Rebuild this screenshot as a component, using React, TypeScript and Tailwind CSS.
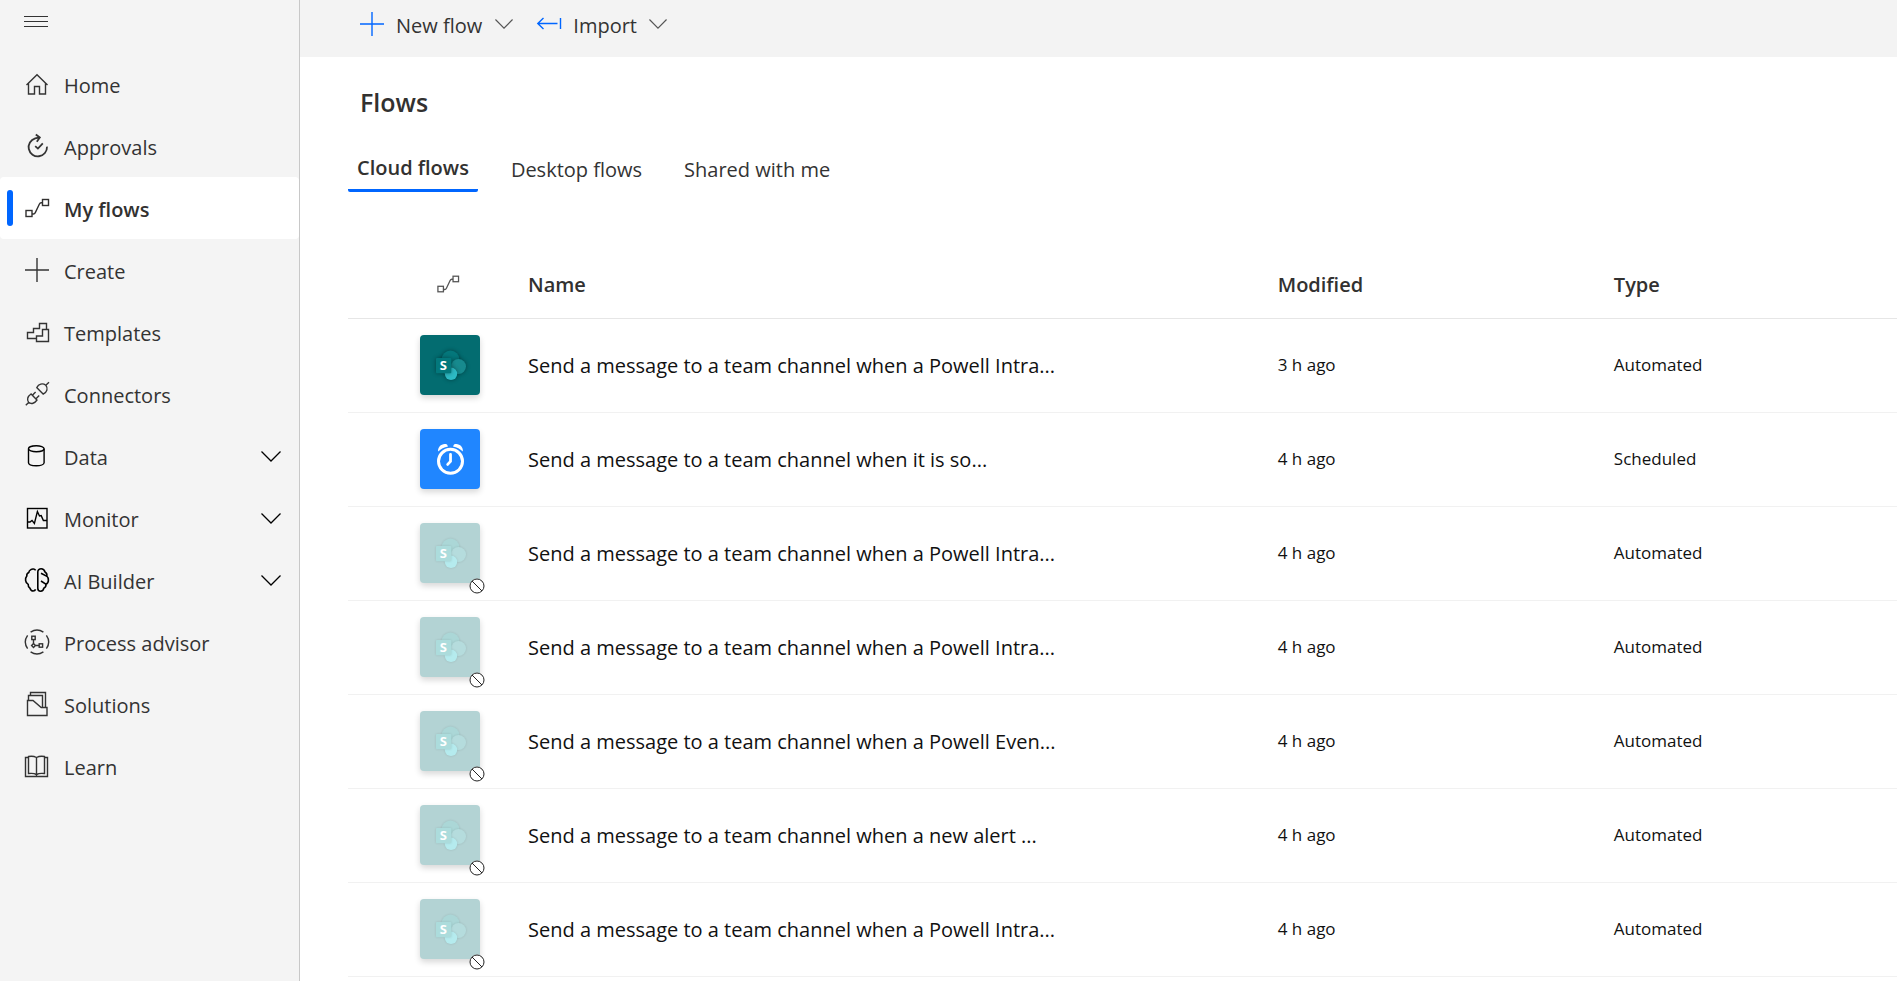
import type { ReactNode } from 'react';

type NavItem = {
  label: string;
  icon: ReactNode;
  active?: boolean;
  expandable?: boolean;
  dark?: boolean;
};

type Flow = {
  name: string;
  modified: string;
  type: string;
  kind: 'sharepoint' | 'schedule';
  disabled?: boolean;
};

const flowGlyph = (
  <>
    <rect x="1" y="14.5" width="6" height="6" />
    <rect x="17.5" y="3.5" width="6" height="6" />
    <path d="M7 18h1.5c1 0 1.4-.6 1.8-1.4l4-8.4c.4-.8.8-1.4 1.8-1.4h1.4" />
  </>
);

const navItems: NavItem[] = [
  {
    label: 'Home',
    icon: <path d="M1.5 13 12 2.8 22.5 13M3.5 11.5V22H9.5V14.5H14.5V22H20.5V11.5" />,
  },
  {
    label: 'Approvals',
    icon: (
      <g strokeWidth="1.8">
        <path d="M22 12.6A9.2 9.2 0 1 1 10.2 4.3L14.5 3.4M10.8.5l4 3-3 4.2M10.2 12.2l2.7 2.4 4.9-5.2" />
      </g>
    ),
  },
  { label: 'My flows', icon: flowGlyph, active: true },
  { label: 'Create', icon: <path d="M12 0V24M0 12H24" /> },
  {
    label: 'Templates',
    icon: <path d="M11 18.5H2.5V12.5H8.5V8.5H14.5V3.5H21.5V9.5M17.5 9.5H23.5V21.5H11.5V16H17.5Z" />,
  },
  {
    label: 'Connectors',
    icon: (
      <>
        <path d="M.8 23.2 3.6 20.4M5.6 11.6 12.4 18.4M6 12C2.6 14.4 1.6 17.6 3.6 20.4 6.4 22.4 9.6 21.4 12 18" />
        <path d="M7.4 13.2 10.6 10M11 16.8 14.2 13.6" />
        <path d="M11.4 5.2 18.6 12.4M11.8 5.6C13.6 1.8 17.6.8 20.8 3.2 23.2 6.4 22.2 10.2 18.2 12M20.8 3.2 24 .2" />
      </>
    ),
  },
  {
    label: 'Data',
    expandable: true,
    dark: true,
    icon: (
      <>
        <ellipse cx="11.3" cy="4.8" rx="7.8" ry="3" />
        <path d="M3.5 4.8V18.8C3.5 20.5 7 21.8 11.3 21.8S19.1 20.5 19.1 18.8V4.8" />
      </>
    ),
  },
  {
    label: 'Monitor',
    expandable: true,
    dark: true,
    icon: (
      <>
        <rect x="2.5" y="2.5" width="19.5" height="19.5" />
        <path d="M2.5 16H5L7 14.4 9.4 17.5 12.4 5.5 14.5 10 16.2 9.6 18.4 14.5H22" />
      </>
    ),
  },
  {
    label: 'AI Builder',
    expandable: true,
    dark: true,
    icon: (
      <g strokeWidth="1.6">
        <path d="M10.6 2.4C9.6.8 7.4.6 5.8 1.7 4.4 2.6 3.8 3.4 3.8 4.5 2.2 5.2 1.6 6.6 1.8 8 .8 9.2.4 10.8.6 12.4.8 14.4 1.6 15.6 3.2 16.4 3 18.2 3.6 19.4 5 20.2 5.6 22 6.8 23 8.2 23 9.4 23 10.2 22.4 10.6 21.4" />
        <path d="M12.8 4V20.2C12.8 22 14 23.2 15.6 23.2 17.4 23.2 18.6 21.8 18.8 20.2 20.6 19.4 21.2 18 21 16.2 22.6 15.4 23.4 13.8 23.4 12.2 23.4 10.4 22.8 9 21.8 8 22.2 6 21.4 4.8 20 4 19.4 2 18 .8 16.2.8 14.2.8 12.8 2 12.8 4Z" />
        <path d="M16 5.2 22 8.4M16 13 21.2 16.4" />
      </g>
    ),
  },
  {
    label: 'Process advisor',
    icon: (
      <>
        <path d="M5.6 2.2A11.5 11.5 0 0 1 18.4 2.2M5.6 21.8A11.5 11.5 0 0 0 18.4 21.8M2.6 5.4A11.5 11.5 0 0 0 2.6 18.6M21.4 5.4A11.5 11.5 0 0 1 21.4 18.6" />
        <rect x="6.8" y="6.2" width="3.4" height="3.4" />
        <rect x="14.2" y="13.8" width="3.4" height="3.4" />
        <path d="M8.5 9.6V13.6M10.4 15.5H14.2M8.5 13.6 10.4 15.5 8.5 17.4 6.6 15.5Z" />
      </>
    ),
  },
  {
    label: 'Solutions',
    icon: <path d="M2.5 8.5H8L16.2 15.5H22V23.5H2.5ZM3.5 8.5V3.5H17.5V15.5M5.5 3.5V.5H20.5V15.5" />,
  },
  {
    label: 'Learn',
    icon: (
      <>
        <path d="M3.5 3.5H.5V22.5H22.5V3.5H19.5" />
        <path d="M11.5 3.5C9.4 2.3 6 2 3.5 2.5V19.5C6 19.2 9.4 19.2 11.5 20.6 13.6 19.2 17 19.2 19.5 19.5V2.5C17 2 13.6 2.3 11.5 3.5ZM11.5 3.6V22.5" />
      </>
    ),
  },
];

const flows: Flow[] = [
  { name: 'Send a message to a team channel when a Powell Intra...', modified: '3 h ago', type: 'Automated', kind: 'sharepoint' },
  { name: 'Send a message to a team channel when it is so...', modified: '4 h ago', type: 'Scheduled', kind: 'schedule' },
  { name: 'Send a message to a team channel when a Powell Intra...', modified: '4 h ago', type: 'Automated', kind: 'sharepoint', disabled: true },
  { name: 'Send a message to a team channel when a Powell Intra...', modified: '4 h ago', type: 'Automated', kind: 'sharepoint', disabled: true },
  { name: 'Send a message to a team channel when a Powell Even...', modified: '4 h ago', type: 'Automated', kind: 'sharepoint', disabled: true },
  { name: 'Send a message to a team channel when a new alert ...', modified: '4 h ago', type: 'Automated', kind: 'sharepoint', disabled: true },
  { name: 'Send a message to a team channel when a Powell Intra...', modified: '4 h ago', type: 'Automated', kind: 'sharepoint', disabled: true },
];

const tileColors = {
  on: { top: '#04777b', right: '#178a8e', bottom: '#2dbac4', square: '#03787c' },
  off: { top: '#abd7d7', right: '#b5dcdd', bottom: '#b5ebee', square: '#acdcdc' },
};

function Glyph({ children, className = '' }: { children: ReactNode; className?: string }) {
  return (
    <svg
      viewBox="0 0 24 24"
      className={`shrink-0 overflow-visible ${className}`}
      fill="none"
      stroke="currentColor"
      strokeWidth="1.4"
      aria-hidden="true"
    >
      {children}
    </svg>
  );
}

function Chevron({ className = '' }: { className?: string }) {
  return (
    <svg viewBox="0 0 20 11" className={`shrink-0 ${className}`} fill="none" stroke="currentColor" strokeWidth="1.3" aria-hidden="true">
      <path d="M.5.5 10 10 19.5.5" />
    </svg>
  );
}

function SharePointIcon({ disabled }: { disabled?: boolean }) {
  const colors = disabled ? tileColors.off : tileColors.on;
  const shadow = disabled
    ? 'drop-shadow-[0_0_1px_rgba(0,0,0,0.12)]'
    : 'drop-shadow-[0_0_2px_rgba(0,0,0,0.4)]';

  return (
    <svg viewBox="0 0 60 60" className="h-full w-full" aria-hidden="true">
      <g className={shadow}>
        <circle cx="30.5" cy="24.5" r="9" fill={colors.top} />
      </g>
      <g className={shadow}>
        <circle cx="38.5" cy="31.5" r="7.5" fill={colors.right} />
      </g>
      <g className={shadow}>
        <circle cx="31" cy="38.8" r="6.2" fill={colors.bottom} />
      </g>
      <g className={shadow}>
        <rect x="16" y="23" width="15.3" height="15.3" rx="1" fill={colors.square} />
      </g>
      <text x="23.4" y="35" textAnchor="middle" fontSize="13" fontWeight="700" fill="#fff">
        S
      </text>
    </svg>
  );
}

function ClockIcon() {
  return (
    <svg viewBox="0 0 60 60" className="h-full w-full" fill="none" stroke="#fff" strokeLinecap="round" aria-hidden="true">
      <circle cx="30.5" cy="32.3" r="12" strokeWidth="3" />
      <path d="M30.5 25.5V32.4L27.7 35.4" strokeWidth="2.8" strokeLinejoin="round" />
      <path d="M18.2 22.6C17.3 18 22.5 13.6 27 15.6L28 17.4C24 18 21 19.6 18.2 22.6ZM42.8 22.6C43.7 18 38.5 13.6 34 15.6L33 17.4C37 18 40 19.6 42.8 22.6Z" fill="#fff" stroke="none" />
    </svg>
  );
}

function tileClass(kind: Flow['kind'], disabled?: boolean) {
  if (disabled) return 'h-full w-full rounded-[4px] bg-[#b3d3d4] shadow-[0_3px_6px_rgba(0,0,0,0.16)]';
  if (kind === 'schedule') return 'h-full w-full rounded-[4px] bg-[#2086ff] shadow-[0_3px_6px_rgba(0,0,0,0.16)]';
  return 'h-full w-full rounded-[4px] bg-[#036c70] shadow-[0_3px_6px_rgba(0,0,0,0.16)]';
}

function FlowTile({ kind, disabled }: { kind: Flow['kind']; disabled?: boolean }) {
  return (
    <div className="relative h-[60px] w-[60px]">
      <div className={tileClass(kind, disabled)}>
        {kind === 'schedule' ? <ClockIcon /> : <SharePointIcon disabled={disabled} />}
      </div>
      {disabled && (
        <svg viewBox="0 0 18 18" className="absolute -right-[6px] -bottom-[12px] h-[18px] w-[18px]" fill="none" role="img" aria-label="Off">
          <circle cx="9" cy="9" r="7.5" fill="#fff" />
          <circle cx="9" cy="9" r="7" stroke="#222" />
          <path d="M4 4l10 10" stroke="#222" />
        </svg>
      )}
    </div>
  );
}

function Sidebar() {
  return (
    <aside className="w-[300px] shrink-0 border-r border-[#c8c8c8] bg-[#f4f4f4]">
      <div className="flex h-[53px] items-start px-6 pt-4">
        <button type="button" aria-label="Collapse navigation" className="flex w-6 flex-col gap-1">
          <span className="h-px w-full bg-[#333]"></span>
          <span className="h-px w-full bg-[#333]"></span>
          <span className="h-px w-full bg-[#333]"></span>
        </button>
      </div>
      <nav>
        {navItems.map((item) => (
          <a
            key={item.label}
            href="#"
            aria-current={item.active ? 'page' : undefined}
            className={
              item.active
                ? 'flex h-[62px] items-center rounded-[4px] bg-white pr-[18px] pl-[7px] text-[20px] font-semibold text-[#323130]'
                : 'flex h-[62px] items-center pr-[18px] pl-[7px] text-[20px] text-[#333]'
            }
          >
            <span className={item.active ? 'h-9 w-[6px] rounded-full bg-[#0066ff]' : 'h-9 w-[6px]'}></span>
            <Glyph className={item.dark ? 'ml-3 h-6 w-6 text-black' : 'ml-3 h-6 w-6'}>{item.icon}</Glyph>
            <span className="ml-[15px] flex-1 pt-1">{item.label}</span>
            {item.expandable && <Chevron className="h-[11px] w-5 text-black" />}
          </a>
        ))}
      </nav>
    </aside>
  );
}

function CommandBar() {
  return (
    <div className="flex h-[57px] items-start bg-[#f3f3f3] pt-2 pl-[60px] text-[20px] text-[#333]">
      <button type="button" className="flex h-8 items-center">
        <Glyph className="h-6 w-6 text-[#0066ff]">
          <path d="M12 0V24M0 12H24" />
        </Glyph>
        <span className="ml-3 pt-1">New flow</span>
        <Chevron className="ml-[13px] h-[10px] w-[18px] text-[#555]" />
      </button>
      <button type="button" className="ml-6 flex h-8 items-center">
        <Glyph className="h-6 w-6 text-[#0066ff]">
          <path d="M.8 11.5H20.5M6.5 6 .8 11.5 6.5 17M23.5 6V17" />
        </Glyph>
        <span className="ml-3 pt-1">Import</span>
        <Chevron className="ml-3 h-[10px] w-[18px] text-[#555]" />
      </button>
    </div>
  );
}

export default function App() {
  return (
    <div className="flex min-h-screen bg-white font-['Open_Sans','Noto_Sans',sans-serif]">
      <Sidebar />
      <main className="min-w-0 flex-1">
        <CommandBar />
        <div className="pl-12">
          <h1 className="pt-[27px] pl-3 text-[25px] leading-9 font-semibold text-[#323130]">Flows</h1>
          <div role="tablist" className="mt-7 flex h-11 text-[20px] leading-7 text-[#333]">
            <button type="button" role="tab" aria-selected="true" className="rounded-b-[2px] border-b-[3px] border-[#0066ff] px-[9px] pb-[2px] font-semibold text-[#323130]">
              Cloud flows
            </button>
            <button type="button" role="tab" aria-selected="false" className="ml-6 px-[9px]">
              Desktop flows
            </button>
            <button type="button" role="tab" aria-selected="false" className="ml-6 px-[9px]">
              Shared with me
            </button>
          </div>
          <table className="mt-[60px] w-full table-fixed border-collapse text-left">
            <thead>
              <tr className="h-[66px] border-b border-[#e6e6e6] text-[20px] text-[#323130]">
                <th className="w-[180px] pb-[2px] pl-[89px]">
                  <Glyph className="h-[22px] w-[22px] text-[#555]">{flowGlyph}</Glyph>
                </th>
                <th className="w-[48.4%] font-semibold">Name</th>
                <th className="w-[21.7%] font-semibold">Modified</th>
                <th className="font-semibold">Type</th>
              </tr>
            </thead>
            <tbody>
              {flows.map((flow, index) => (
                <tr key={index} className="h-[94px] border-b border-[#f1f1f1] text-[#111]">
                  <td className="pl-[72px]">
                    <FlowTile kind={flow.kind} disabled={flow.disabled} />
                  </td>
                  <td className="truncate pt-[2px] text-[20px]">
                    <a href="#">{flow.name}</a>
                  </td>
                  <td className="text-[17px]">{flow.modified}</td>
                  <td className="text-[17px]">{flow.type}</td>
                </tr>
              ))}
            </tbody>
          </table>
        </div>
      </main>
    </div>
  );
}
